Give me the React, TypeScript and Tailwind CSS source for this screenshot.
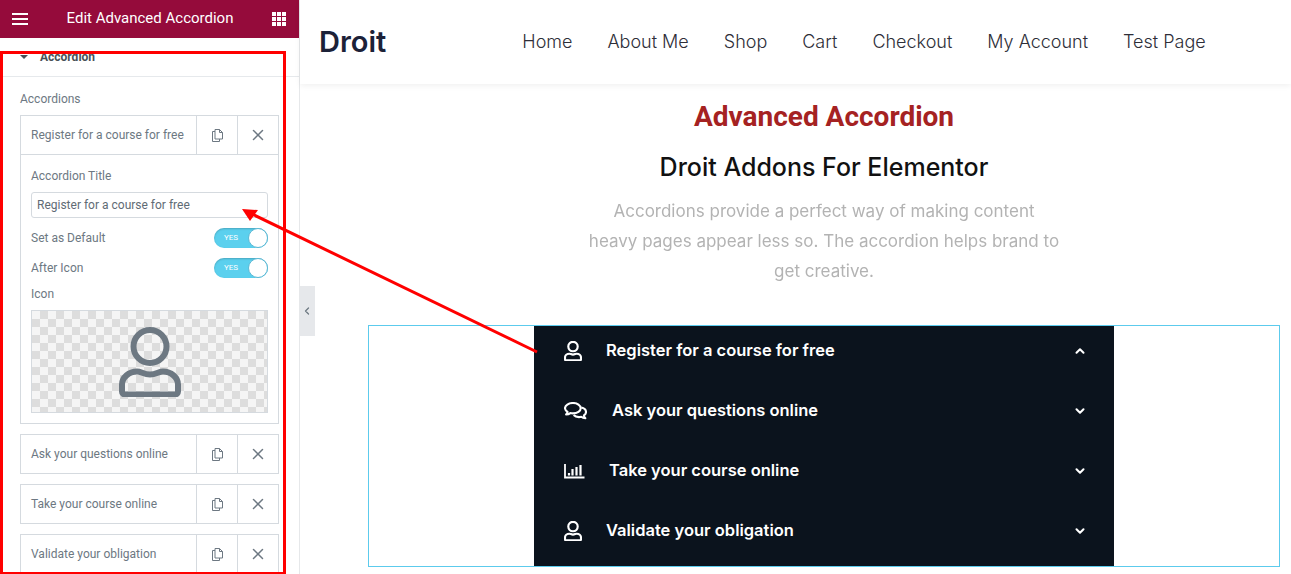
import React from "react";
import { X, ChevronUp, ChevronDown, ChevronLeft } from "lucide-react";

const poppins = "font-['Inter','Noto_Sans',sans-serif]";
const roboto = "font-['Roboto','Liberation_Sans',sans-serif]";

function UserIcon({ w = 18, h = 20, color = "#fff", sw = 7.5 }: { w?: number; h?: number; color?: string; sw?: number }) {
  return (
    <svg width={w} height={h} viewBox="0 0 62 70" fill="none" stroke={color} strokeWidth={sw}>
      <circle cx="31" cy="19.500" r="16.500" />
      <path d="M18 44.500c4 0 7 3 13 3s9-3 13-3c8 0 15 6 15 13v7a3 3 0 0 1-3 3H6a3 3 0 0 1-3-3v-7c0-7 7-13 15-13z" strokeLinejoin="round" />
    </svg>
  );
}

function CommentsIcon() {
  return (
    <svg width="23" height="18" viewBox="0 0 23 18" fill="none" stroke="#fff" strokeWidth="2.100" strokeLinejoin="round">
      <path d="M9 1c4.300 0 7.700 2.300 7.700 5.200S13.300 11.400 9 11.400c-.9 0-1.800-.1-2.600-.3-1.200.9-2.700 1.300-4.300 1.300.8-.8 1.300-1.700 1.400-2.500C2 8.900 1 7.600 1 6.200 1 3.300 4.600 1 9 1z" />
      <path d="M17.300 5.500c2.700.6 4.700 2.400 4.700 4.400 0 1.400-.8 2.600-2.100 3.400.1.900.6 2 1.400 2.900-1.500 0-3-.5-4.100-1.400-.7.200-1.400.3-2.200.3-2.200 0-4.200-.8-5.300-2.100" />
    </svg>
  );
}

function ChartIcon() {
  return (
    <svg width="21" height="16" viewBox="0 0 21 16" fill="none" stroke="#fff">
      <path d="M1 1v13.500h19.500" strokeWidth="1.800" />
      <path d="M5 12.500v-2.500M8.500 12.500V6M12.500 12.500V4M16.500 12.500V2" strokeWidth="2.200" />
    </svg>
  );
}

function CopyIcon() {
  return (
    <svg width="11" height="13" viewBox="0 0 11 13" fill="none" stroke="#6d7882" strokeWidth="1">
      <path d="M3 2.500H.5v10h7V10" />
      <path d="M3 .5h4.500l3 3V10H3z" />
      <path d="M7.500.5v3h3" />
    </svg>
  );
}

function RepeaterRow({ label }: { label: string }) {
  return (
    <div className="flex h-10 shrink-0 border border-[#d5dadf]">
      <div className="flex flex-1 items-center pl-[10px] text-xs text-[#6d7882]">{label}</div>
      <div className="flex w-[41px] items-center justify-center border-l border-[#d5dadf]">
        <CopyIcon />
      </div>
      <div className="flex w-[41px] items-center justify-center border-l border-[#d5dadf]">
        <X size={18} color="#6d7882" strokeWidth={2} />
      </div>
    </div>
  );
}

function Toggle({ label }: { label: string }) {
  return (
    <div className="flex h-5 items-center justify-between">
      <span className="text-xs text-[#6d7882]">{label}</span>
      <div className="relative h-5 w-[54px] rounded-full bg-[#5bd0ee] shadow-[inset_0_1px_2px_rgba(0,0,0,0.2)]">
        <span className="absolute left-[10px] top-[5px] text-[8px] leading-[10px] text-white">YES</span>
        <span className="absolute right-0 top-0 h-5 w-5 rounded-full border border-[#5bb8d4] bg-white" />
      </div>
    </div>
  );
}

function Sidebar() {
  return (
    <aside className={`flex h-[574px] w-[300px] shrink-0 flex-col overflow-hidden border-r border-[#e6e8ea] bg-white ${roboto}`}>
      <header className="flex h-[38px] shrink-0 items-center justify-between bg-[#950b3b] pb-[1px] pl-[12px] pr-[13px] text-white">
        <div className="flex w-4 flex-col gap-[3px]">
          <span className="h-[2px] bg-white" />
          <span className="h-[2px] bg-white" />
          <span className="h-[2px] bg-white" />
        </div>
        <h1 className="text-[15px] font-normal">Edit Advanced Accordion</h1>
        <div className="grid grid-cols-3 gap-[1px]">
          {Array.from({ length: 9 }).map((_, i) => (
            <span key={i} className="h-[4px] w-[4px] bg-white" />
          ))}
        </div>
      </header>
      <div className="flex h-[39px] shrink-0 items-center gap-[12px] border-b border-[#e6e9ec] pl-[20px]">
        <span className="h-0 w-0 border-x-[4px] border-t-[4px] border-x-transparent border-t-[#495157]" />
        <span className="text-xs font-bold text-[#495157]">Accordion</span>
      </div>
      <div className="flex flex-col px-[20px]">
        <div className="flex h-[38px] items-center pt-[5px] text-xs text-[#6d7882]">Accordions</div>
        <RepeaterRow label="Register for a course for free" />
        <div className="flex h-[269px] flex-col border-x border-b border-[#d5dadf] px-[10px]">
          <div className="flex h-[29px] shrink-0 items-end text-xs text-[#6d7882]">Accordion Title</div>
          <div className="mt-[8px] flex h-[26px] shrink-0 items-center rounded-[3px] border border-[#d5dadf] pl-[5px] text-xs text-[#5f6b75]">
            Register for a course for free
          </div>
          <div className="mt-[10px] flex flex-col gap-[10px]">
            <Toggle label="Set as Default" />
            <Toggle label="After Icon" />
          </div>
          <div className="mt-[8px] text-xs leading-[16px] text-[#6d7882]">Icon</div>
          <div className="mt-[8px] flex h-[103px] shrink-0 items-center justify-center border border-[#d5dadf] bg-[repeating-conic-gradient(#dddddd_0_25%,#f5f5f5_0_50%)] bg-[length:16px_16px]">
            <UserIcon w={62} h={70} color="#6d7882" sw={6} />
          </div>
        </div>
        <div className="mt-[10px] flex flex-col gap-[10px]">
          <RepeaterRow label="Ask your questions online" />
          <RepeaterRow label="Take your course online" />
          <RepeaterRow label="Validate your obligation" />
        </div>
      </div>
    </aside>
  );
}

const navItems = ["Home", "About Me", "Shop", "Cart", "Checkout", "My Account", "Test Page"];

const accordionItems: { label: string; icon: React.ReactNode; iconW: string; up?: boolean }[] = [
  { label: "Register for a course for free", icon: <UserIcon />, iconW: "w-[42px]", up: true },
  { label: "Ask your questions online", icon: <CommentsIcon />, iconW: "w-[48px]" },
  { label: "Take your course online", icon: <ChartIcon />, iconW: "w-[45px]" },
  { label: "Validate your obligation", icon: <UserIcon />, iconW: "w-[42px]" },
];

function Main() {
  return (
    <main className={`flex h-[574px] min-w-0 flex-1 flex-col bg-white ${poppins}`}>
      <nav className="relative flex h-[84px] shrink-0 items-center pb-[1px] pl-[19px] shadow-[0_2px_6px_rgba(0,0,0,0.06)]">
        <span className="text-[29px] font-semibold text-[#1c2238]">Droit</span>
        <ul className="ml-[136px] flex gap-[35px] text-[18px] font-light text-[#2e2e38]">
          {navItems.map((n) => (
            <li key={n}>{n}</li>
          ))}
        </ul>
      </nav>
      <section className="relative flex flex-1 flex-col items-center pl-[68px] pr-[11px]">
        <div className="absolute left-0 top-[202px] flex h-[50px] w-[15px] items-center justify-center bg-[#e6e8eb] pr-[2px]">
          <ChevronLeft size={12} color="#6d7882" strokeWidth={2.500} />
        </div>
        <h2 className={`mt-[15px] text-[28px] leading-[36px] font-bold text-[#a52222] ${roboto}`}>Advanced Accordion</h2>
        <h3 className="mt-[14px] text-[25px] leading-[36px] font-medium text-[#111]">Droit Addons For Elementor</h3>
        <p className="mt-[11px] w-[500px] text-center text-[17px] leading-[30px] text-[#b3b3b3] blur-[0.4px]">
          Accordions provide a perfect way of making content
          <br />
          heavy pages appear less so. The accordion helps brand to
          <br />
          get creative.
        </p>
        <div className="mt-[39px] flex h-[242px] w-[912px] shrink-0 justify-center border border-[#5ccbed]">
          <div className="flex w-[580px] flex-col bg-[#0b131d]">
            {accordionItems.map((item) => (
              <div key={item.label} className="flex h-[60px] items-center pb-[10px] pl-[30px] pr-[27px] text-white">
                <div className={`flex ${item.iconW} shrink-0 items-center`}>{item.icon}</div>
                <span className="flex-1 pb-[2px] text-[16.500px] font-semibold">{item.label}</span>
                {item.up ? <ChevronUp size={14} strokeWidth={3.500} /> : <ChevronDown size={14} strokeWidth={3.500} />}
              </div>
            ))}
          </div>
        </div>
      </section>
    </main>
  );
}

export default function App() {
  return (
    <div className="relative flex h-[574px] w-[1291px] overflow-hidden bg-white">
      <Sidebar />
      <Main />
      <div className="absolute left-0 top-[51px] h-[524px] w-[286px] border-[3px] border-[#ff0000]" />
      <svg className="absolute left-0 top-0" width="1291" height="574" fill="none">
        <line x1="537" y1="352" x2="252" y2="214" stroke="#ff0000" strokeWidth="3" />
        <polygon points="242,209 258,210 250,221" fill="#ff0000" />
      </svg>
    </div>
  );
}
